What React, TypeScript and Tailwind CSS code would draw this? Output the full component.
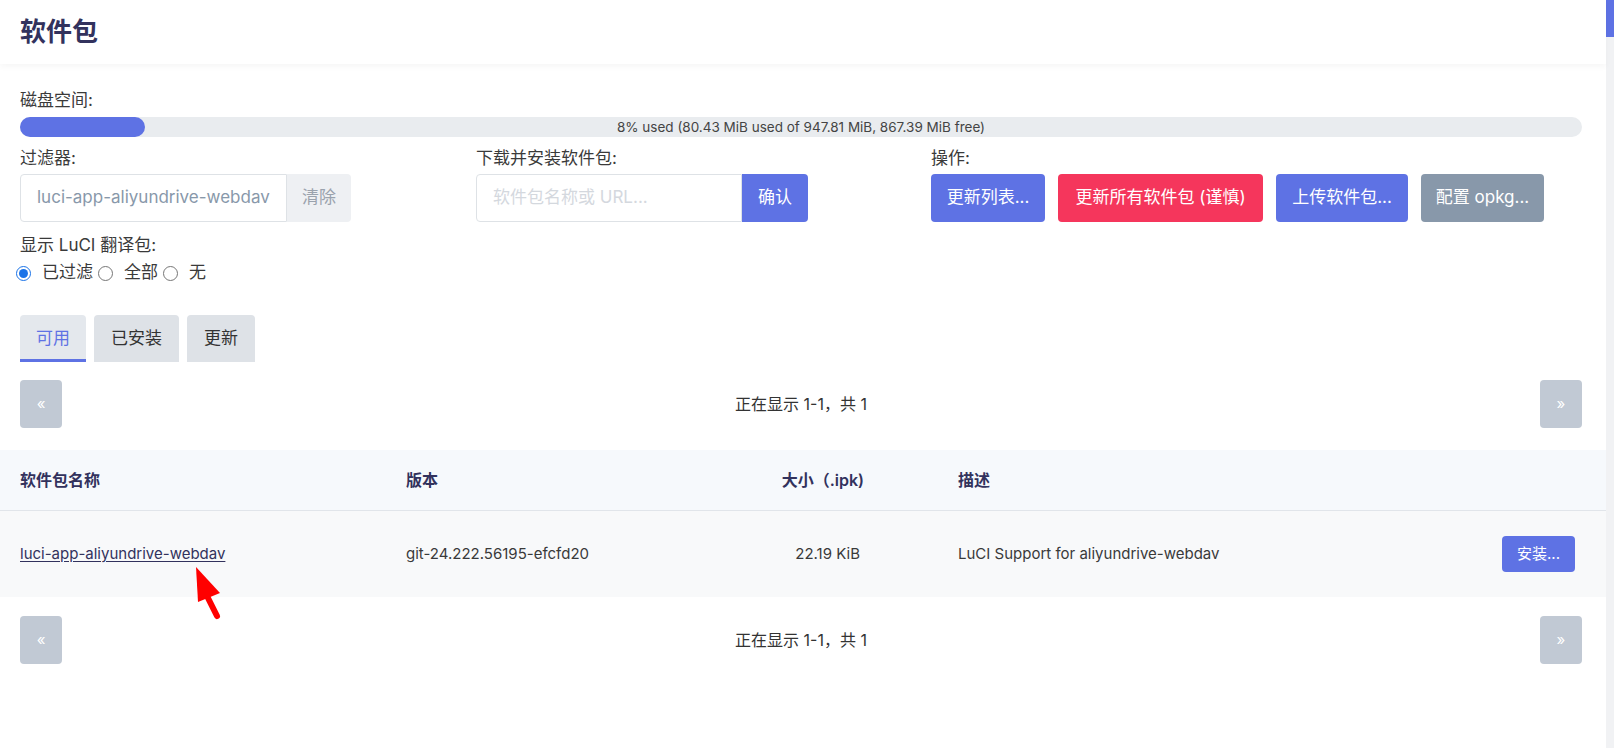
import React from "react";

const tabs = [
  { label: "可用", active: true },
  { label: "已安装", active: false },
  { label: "更新", active: false },
];

const actions = [
  { label: "更新列表...", cls: "w-[114px] bg-[#5e72e4]" },
  { label: "更新所有软件包 (谨慎)", cls: "w-[205px] bg-[#f5365c]" },
  { label: "上传软件包...", cls: "w-[132px] bg-[#5e72e4]" },
  { label: "配置 opkg...", cls: "w-[123px] bg-[#8898aa]" },
];

const Pager = () => (
  <div className="flex items-center justify-between pl-5 pr-6">
    <button className="flex h-12 w-[42px] items-center justify-center rounded bg-[#c1c9d4] text-[15px] text-white">
      «
    </button>
    <span className="text-[16px] text-[#333]">正在显示 1-1，共 1</span>
    <button className="flex h-12 w-[42px] items-center justify-center rounded bg-[#c1c9d4] text-[15px] text-white">
      »
    </button>
  </div>
);

const Radio = ({ checked, label }: { checked?: boolean; label: string }) => (
  <label className="flex items-center">
    {checked ? (
      <span className="flex h-[15px] w-[15px] items-center justify-center rounded-full border-[1.5px] border-[#1a73e8]">
        <span className="h-[9px] w-[9px] rounded-full bg-[#1a73e8]" />
      </span>
    ) : (
      <span className="h-[15px] w-[15px] rounded-full border border-[#767676]" />
    )}
    <span className="ml-[11px] mr-[5px]">{label}</span>
  </label>
);

export default function App() {
  return (
    <div className="flex h-[748px] w-[1614px] overflow-hidden bg-white font-['Inter','Noto_Sans_CJK_SC',sans-serif] text-[#3a3a3a]">
      <div className="relative flex min-w-0 flex-1 flex-col">
        {/* Header */}
        <header className="flex h-16 shrink-0 items-center px-5 shadow-[0_3px_6px_rgba(0,0,0,0.035)]">
          <h2 className="text-[26px] font-bold leading-none text-[#32325d]">软件包</h2>
        </header>

        <div className="pl-5 pr-6 pt-[26px]">
          {/* Disk space */}
          <div className="text-[17px] leading-5">磁盘空间:</div>
          <div className="relative mt-[7px] h-5 rounded-full bg-[#e9ecef]">
            <div className="h-full w-[8%] rounded-full bg-[#5e72e4]" />
            <div className="absolute inset-0 flex items-center justify-center text-[13.5px] text-[#444]">
              8% used (80.43 MiB used of 947.81 MiB, 867.39 MiB free)
            </div>
          </div>

          {/* Controls */}
          <div className="mt-[11px] grid grid-cols-[456px_455px_1fr]">
            <div>
              <div className="text-[17px] leading-5">过滤器:</div>
              <div className="mt-[6px] flex h-12">
                <div className="flex w-[267px] items-center rounded-l border border-[#dee2e6] px-4 text-[17px] text-[#8898aa]">
                  luci-app-aliyundrive-webdav
                </div>
                <div className="flex w-[64px] items-center justify-center rounded-r bg-[#eef0f3] text-[17px] text-[#9aa2ad]">
                  清除
                </div>
              </div>
            </div>
            <div>
              <div className="text-[17px] leading-5">下载并安装软件包:</div>
              <div className="mt-[6px] flex h-12">
                <div className="flex w-[266px] items-center rounded-l border border-[#dee2e6] px-4 text-[17px] text-[#d4d8de]">
                  软件包名称或 URL...
                </div>
                <button className="w-[66px] rounded-r bg-[#5e72e4] text-[17px] text-white">确认</button>
              </div>
            </div>
            <div>
              <div className="text-[17px] leading-5">操作:</div>
              <div className="mt-[6px] flex gap-[13px]">
                {actions.map((a) => (
                  <button key={a.label} className={`h-12 rounded text-[17px] text-white ${a.cls}`}>
                    {a.label}
                  </button>
                ))}
              </div>
            </div>
          </div>

          {/* LuCI translation */}
          <div className="mt-[13px] text-[17px] leading-5">显示 LuCI 翻译包:</div>
          <div className="-ml-1 mt-2 flex h-5 items-center text-[17px]">
            <Radio checked label="已过滤" />
            <Radio label="全部" />
            <Radio label="无" />
          </div>

          {/* Tabs */}
          <div className="mt-8 flex gap-2">
            {tabs.map((t) => (
              <div
                key={t.label}
                className={
                  t.active
                    ? "flex h-[47px] items-center rounded-t border-b-[3px] border-[#5e72e4] bg-[#e4e8ed] px-4 pt-[3px] text-[17px] text-[#5e72e4]"
                    : "flex h-[47px] items-center rounded-t bg-[#dee2e7] px-[17px] text-[17px] text-[#333]"
                }
              >
                {t.label}
              </div>
            ))}
          </div>
        </div>

        <div className="mt-[18px]">
          <Pager />
        </div>

        {/* Table */}
        <div className="mt-[22px]">
          <div className="grid h-[61px] grid-cols-[386px_314px_238px_1fr_auto] items-center border-b border-[#e1e5ea] bg-[#f6f9fc] text-[16px] font-semibold text-[#32325d]">
            <div className="pl-5">软件包名称</div>
            <div className="pl-5">版本</div>
            <div className="pr-[74px] text-right">大小（.ipk)</div>
            <div className="pl-5">描述</div>
            <div />
          </div>
          <div className="grid h-[86px] grid-cols-[386px_314px_238px_1fr_auto] items-center bg-[#f8f9fa] text-[15px] text-[#3a3a3a]">
            <div className="pl-5">
              <a className="text-[#32325d] underline underline-offset-2">luci-app-aliyundrive-webdav</a>
            </div>
            <div className="pl-5">git-24.222.56195-efcfd20</div>
            <div className="pr-[78px] text-right">22.19 KiB</div>
            <div className="pl-5">LuCI Support for aliyundrive-webdav</div>
            <div className="pr-[31px]">
              <button className="h-9 w-[73px] rounded bg-[#5e72e4] text-[15px] text-white">安装...</button>
            </div>
          </div>
        </div>

        <div className="mt-[19px]">
          <Pager />
        </div>

        {/* annotation arrow */}
        <svg className="pointer-events-none absolute left-[185px] top-[560px] h-[65px] w-[45px]" viewBox="0 0 45 65">
          <polygon points="11,7 13,42 35,33" fill="#ff0000" />
          <line x1="22" y1="36" x2="32" y2="56" stroke="#ff0000" strokeWidth="6" strokeLinecap="round" />
        </svg>
      </div>

      {/* scrollbar */}
      <div className="w-2 shrink-0 bg-[#f1f2f4]">
        <div className="h-[37px] bg-[#5e72e4]" />
      </div>
    </div>
  );
}
